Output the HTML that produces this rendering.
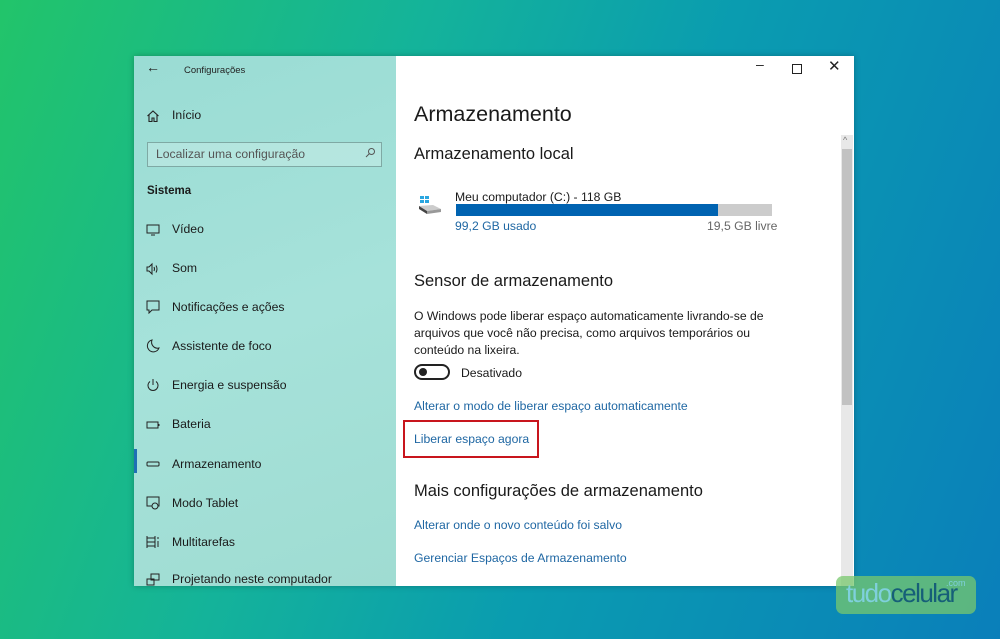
<!DOCTYPE html><html><head><meta charset="utf-8"><style>
*{margin:0;padding:0;box-sizing:border-box}
body{width:1000px;height:639px;overflow:hidden;position:relative;font-family:"Liberation Sans",sans-serif;
background:linear-gradient(110deg,#22c46a 0%,#14b39a 35%,#0a9cb0 60%,#0a7fba 100%);}
.a{position:absolute;white-space:nowrap}
#win{position:absolute;left:134px;top:56px;width:720px;height:530px;background:#fff;box-shadow:0 0 6px rgba(0,0,0,.25);overflow:hidden}
#side{position:absolute;left:0;top:0;width:262px;height:530px;background:linear-gradient(160deg,#9adcd4,#a6e2da 50%,#9fdcd2)}
.it{position:absolute;left:38px;font-size:12.2px;color:#1a1a1a}
.ic{position:absolute;left:12px;width:14px;height:14px}
.lk{color:#1f67a3;font-size:12.2px}
.t{font-size:12.2px;color:#1a1a1a}
</style></head><body>
<div id="win">
<div id="side">
<div class="a" style="left:12px;top:3px;font-size:14px;color:#222">←</div>
<div class="a" style="left:50px;top:9px;font-size:9.5px;color:#222">Configurações</div>
<svg class="ic" style="top:53px" viewBox="0 0 14 14" fill="none" stroke="#222" stroke-width="1.1"><path d="M1.5 7L7 2l5.5 5M3 6v6.5h3V9h2v3.5h3V6"/></svg>
<div class="it" style="top:52px">Início</div>
<div class="a" style="left:13px;top:86px;width:235px;height:25px;border:1.5px solid #7fa9a4;background:rgba(255,255,255,.22)"></div>
<div class="a" style="left:22px;top:91px;font-size:12.2px;color:#555">Localizar uma configuração</div>
<svg class="a" style="left:230px;top:91px" width="12" height="12" viewBox="0 0 12 12" fill="none" stroke="#555"><circle cx="7.5" cy="4.5" r="3"/><path d="M5.5 6.5L2 10"/></svg>
<div class="a" style="left:13px;top:129px;font-size:11.5px;font-weight:bold;color:#1a1a1a">Sistema</div>
<svg class="ic" style="top:167px" viewBox="0 0 14 14" fill="none" stroke="#222"><rect x="1" y="2" width="12" height="8"/><path d="M5 12h4"/></svg>
<div class="it" style="top:166px">Vídeo</div>
<svg class="ic" style="top:206px" viewBox="0 0 14 14" fill="none" stroke="#222"><path d="M1 5h2l3-3v10L3 9H1zM8 5q1 2 0 4M10 3.5q2 3.5 0 7"/></svg>
<div class="it" style="top:205px">Som</div>
<svg class="ic" style="top:244px" viewBox="0 0 14 14" fill="none" stroke="#222"><path d="M1 1h12v9H6l-3 3v-3H1z"/></svg>
<div class="it" style="top:244px">Notificações e ações</div>
<svg class="ic" style="top:283px" viewBox="0 0 14 14" fill="none" stroke="#222"><path d="M6 1a6 6 0 1 0 7 8A6 6 0 0 1 6 1z"/></svg>
<div class="it" style="top:283px">Assistente de foco</div>
<svg class="ic" style="top:322px" viewBox="0 0 14 14" fill="none" stroke="#222"><path d="M4 3.5a5 5 0 1 0 6 0M7 1v6"/></svg>
<div class="it" style="top:322px">Energia e suspensão</div>
<svg class="ic" style="top:362px" viewBox="0 0 14 14" fill="none" stroke="#222"><rect x="1" y="4" width="11" height="6"/><path d="M13 6v2"/></svg>
<div class="it" style="top:361px">Bateria</div>
<div class="a" style="left:0;top:393px;width:3px;height:24px;background:#1e6fb5"></div>
<svg class="ic" style="top:401px" viewBox="0 0 14 14" fill="none" stroke="#222"><rect x="1" y="5" width="12" height="4" rx="1"/></svg>
<div class="it" style="top:401px">Armazenamento</div>
<svg class="ic" style="top:440px" viewBox="0 0 14 14" fill="none" stroke="#222"><rect x="1" y="1" width="12" height="9"/><circle cx="9" cy="10" r="3" fill="#a3e0d8"/></svg>
<div class="it" style="top:440px">Modo Tablet</div>
<svg class="ic" style="top:479px" viewBox="0 0 14 14" fill="none" stroke="#222"><path d="M1 1v12M9 1v12M1 3h8M1 11h8M1 7h8M12 2v2M12 6v6"/></svg>
<div class="it" style="top:479px">Multitarefas</div>
<svg class="ic" style="top:517px" viewBox="0 0 14 14" fill="none" stroke="#222"><rect x="5" y="1" width="8" height="6"/><rect x="1" y="6" width="7" height="6"/></svg>
<div class="it" style="top:516px">Projetando neste computador</div>
</div>
<div class="a" style="left:622px;top:0px;font-size:14px;color:#222">–</div>
<div class="a" style="left:658px;top:8px;width:10px;height:10px;border:1px solid #222"></div>
<div class="a" style="left:694px;top:1px;font-size:15px;color:#222">✕</div>
<div class="a" style="left:280px;top:46px;font-size:21.5px;color:#1a1a1a">Armazenamento</div>
<div class="a" style="left:280px;top:89px;font-size:16.5px;color:#1a1a1a">Armazenamento local</div>
<svg class="a" style="left:284px;top:138px" width="24" height="22" viewBox="0 0 24 22"><rect x="2" y="2" width="4" height="3" fill="#2aa6e0"/><rect x="7" y="2" width="4" height="3" fill="#2aa6e0"/><rect x="2" y="6" width="4" height="3" fill="#2aa6e0"/><rect x="7" y="6" width="4" height="3" fill="#2aa6e0"/><path d="M1 12l14-1 8 4-14 2z" fill="#ccc"/><path d="M1 12l8 5v3l-8-5z" fill="#444"/><path d="M9 17l14-2v3l-14 2z" fill="#999"/></svg>
<div class="a t" style="left:321px;top:134px">Meu computador (C:) - 118 GB</div>
<div class="a" style="left:322px;top:148px;width:316px;height:12px;background:#ccc"></div>
<div class="a" style="left:322px;top:148px;width:262px;height:12px;background:#0063b1"></div>
<div class="a lk" style="left:321px;top:163px">99,2 GB usado</div>
<div class="a t" style="left:573px;top:163px;color:#666">19,5 GB livre</div>
<div class="a" style="left:280px;top:216px;font-size:16.5px;color:#1a1a1a">Sensor de armazenamento</div>
<div class="a t" style="left:280px;top:252px;line-height:17px">O Windows pode liberar espaço automaticamente livrando-se de<br>arquivos que você não precisa, como arquivos temporários ou<br>conteúdo na lixeira.</div>
<div class="a" style="left:280px;top:308px;width:36px;height:16px;border:2px solid #222;border-radius:8px"></div>
<div class="a" style="left:285px;top:312px;width:8px;height:8px;border-radius:50%;background:#222"></div>
<div class="a t" style="left:327px;top:310px">Desativado</div>
<div class="a lk" style="left:280px;top:343px">Alterar o modo de liberar espaço automaticamente</div>
<div class="a" style="left:269px;top:364px;width:136px;height:38px;border:2.5px solid #c8151d"></div>
<div class="a lk" style="left:280px;top:376px">Liberar espaço agora</div>
<div class="a" style="left:280px;top:426px;font-size:16.5px;color:#1a1a1a">Mais configurações de armazenamento</div>
<div class="a lk" style="left:280px;top:462px">Alterar onde o novo conteúdo foi salvo</div>
<div class="a lk" style="left:280px;top:495px">Gerenciar Espaços de Armazenamento</div>
<div class="a" style="left:707px;top:79px;width:12px;height:451px;background:#e8e8e8"></div>
<div class="a" style="left:709px;top:79px;font-size:9px;color:#777">^</div>
<div class="a" style="left:708px;top:93px;width:10px;height:256px;background:#c2c2c2"></div>
</div>
<div class="a" style="left:836px;top:576px;width:140px;height:38px;border-radius:7px;background:rgba(120,200,110,.75)"></div>
<div class="a" style="left:846px;top:578px;font-size:26px;letter-spacing:-1.5px;color:#7fd0dc">tudo<span style="color:#165f78">celular</span></div>
<div class="a" style="left:946px;top:578px;font-size:9px;color:#7fd0dc">.com</div>
</body></html>
